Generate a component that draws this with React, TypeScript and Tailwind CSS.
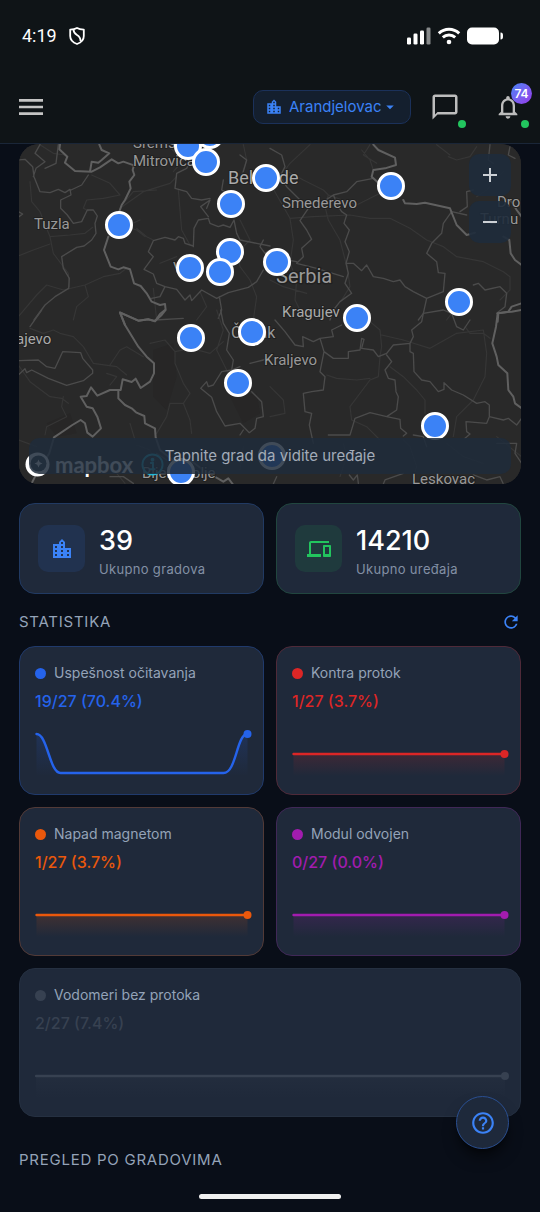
import React from "react";
import {
  MdAdd,
  MdArrowDropDown,
  MdChatBubbleOutline,
  MdDevices,
  MdHelpOutline,
  MdLocationCity,
  MdMenu,
  MdNotificationsNone,
  MdRefresh,
  MdRemove,
} from "react-icons/md";

const MAP_W = 504;
const MAP_H = 340;

const markers = [
  { x: 170, y: 2 },
  { x: 192, y: -9 },
  { x: 188, y: 18 },
  { x: 248, y: 34 },
  { x: 373, y: 42 },
  { x: 213, y: 60 },
  { x: 100, y: 81 },
  { x: 212, y: 108 },
  { x: 172, y: 124 },
  { x: 202, y: 128 },
  { x: 259, y: 118 },
  { x: 442, y: 158 },
  { x: 339, y: 174 },
  { x: 234, y: 188 },
  { x: 173, y: 194 },
  { x: 220, y: 239 },
  { x: 418, y: 282 },
  { x: 254, y: 312 },
  { x: 163, y: 328 },
];

function MapDrawing() {
  return (
    <svg
      className="absolute inset-0 h-full w-full"
      viewBox={`0 0 ${MAP_W} ${MAP_H}`}
      preserveAspectRatio="xMidYMid slice"
      aria-hidden="true"
      fill="none"
      strokeLinejoin="round"
      strokeLinecap="round"
    >
      <rect width={MAP_W} height={MAP_H} fill="#292929" />
      <g transform="translate(-8 -4) scale(.33333)">
        <g stroke="#363636" strokeWidth="3.5">
          <path d="M90 14L130 40L165 45M60 125L65 185L90 215L120 290L180 285L225 280L248 262M120 290L130 340L175 400L178 440M25 348L70 330L120 312M245 105L300 130L330 165L280 175L230 180L220 205L235 212M330 205L400 155L480 130L500 110M340 190L370 155L440 150M380 265L410 290L430 300M505 150L515 270L540 315M390 240L345 260L380 270L405 290M25 530L80 465L110 435L160 450L225 435L280 410L330 400L350 385M225 435L235 470L200 500L190 540M450 370L500 350M430 445L440 540M700 14L710 60L690 120M680 330L690 380L720 420L740 470L730 540" />
          <path d="M570 455L590 500L560 540M470 14L520 60L490 95M690 240L720 300L690 330" />
        </g>
        <g stroke="#4b4b4b" strokeWidth="4">
          <path d="M25 60L45 58L68 80L72 110L90 155L120 158L145 148L165 158L180 148L183 165L152 180L152 205L172 225L190 250L215 245L232 210L250 210L262 228L255 250L258 280L245 300L222 318L200 322L155 350L160 385L178 415L176 445L135 470L105 495L72 540M90 14L75 40L105 65L78 85L70 110M145 14L138 70L105 85M25 215L38 222L27 230M183 150L215 135L235 105" />
          <path d="M500 100L495 145L530 155L545 175L575 180L600 175M500 100L530 85L545 55M550 320L552 265L565 240L595 235L600 250L625 260L640 255L660 262L672 240L680 280L690 300L740 310L780 318M550 318L525 310L520 295L505 290L495 300L465 292L430 302L415 335L430 350L402 388L430 402L440 430L465 440L500 448L525 480L540 465L545 482L575 450L620 475L655 458L715 442L740 425L760 390M590 205L600 180L572 200L595 230M465 440L450 470L425 475M640 120L635 150L665 165L650 185M700 95L710 60L690 45M628 470L635 510L625 535" />
          <path d="M760 300L750 320L765 340L780 330M435 540L520 535" />
        </g>
        <path
          stroke="#606060"
          strokeWidth="6"
          d="M150 14L148 28L172 50L165 68L195 93L245 95L270 82L305 58L325 70L340 65L372 76L368 90L373 105L358 125L362 145L345 180L335 195L328 215M240 95L245 65L265 68L275 60L298 40L275 30L268 14M295 290L282 330L302 380L325 388L340 382L360 388L372 430L392 438L410 460L425 485L450 495L465 492L467 510L455 525L435 543L415 538L385 542L330 517L345 555"
        />
      </g>
      <g transform="translate(252 -4) scale(.33333)">
        <g stroke="#363636" strokeWidth="3.5">
          <path d="M120 14L60 70L45 90L100 120L160 150L175 165L165 200L175 240L210 300L228 370M0 130L60 235L130 230L240 225L300 235L360 235L420 265L470 300L520 320L560 350L640 365L700 395L720 410M60 235L70 300L60 370L80 420L75 480L100 530M175 165L260 195L330 160M275 30L300 60L310 90M535 50L560 60L600 50L620 20M300 14L280 45L320 70M500 14L540 45M700 95L650 150L620 170M0 420L40 440L110 460M720 410L720 450L690 480M530 540L560 500M230 370L240 440L215 480" />
        </g>
        <g stroke="#4b4b4b" strokeWidth="4">
          <path d="M0 25L35 45L45 80L30 110L50 140L100 190L115 205L90 242L110 270L125 298L95 325L100 350L80 370M310 115L260 125L230 155L190 165L205 200L215 215L230 225L222 250L238 270L225 305L238 335L228 370L235 400L225 430L245 460L210 485L190 510L180 540M160 185L190 165M228 370L250 370L275 392L290 375L310 410L340 415L370 425L390 420L405 440L430 455L470 475L520 455L525 400L505 398L500 365L470 340L485 310L515 280L520 250L545 215L590 225M470 475L460 520L445 540M610 435L625 430L645 450L690 440L710 460L705 500L680 520M720 20L715 45L735 55M610 150L590 155L592 200L570 215M80 370L140 385L220 410M0 350L50 360L80 365M660 14L655 60L670 70" />
        </g>
        <path
          stroke="#606060"
          strokeWidth="6"
          d="M310 14L325 30L375 53L378 75L345 85L310 90L305 110L325 128M400 180L405 190L440 192L465 188L540 205L560 255L590 285L615 278M700 175L725 185L740 210L755 230M700 290L718 300L722 340L735 360L755 375M755 490L725 500L715 515L685 520L683 545"
        />
      </g>
      <g transform="translate(-8 166) scale(.33333)">
        <g fill="#272626">
          <path d="M430 120L490 100L500 200L470 300L430 260Z M660 260L740 250L750 310L700 340Z M110 340L180 310L200 370L140 380Z" />
        </g>
        <g stroke="#363636" strokeWidth="3.5">
          <path d="M60 55L100 70L130 60L150 70L190 80L220 110L250 160L320 170L350 195M300 165L330 120L350 110L400 140M420 100L465 90L495 125L495 160L520 220L540 250L520 280L480 280L470 320L440 370M495 125L545 115L600 130L640 95M25 165L60 215L120 260L155 265L175 280M160 260L155 290L170 320L110 350L105 375M290 190L320 200L300 225M360 340L375 390M700 410L690 480M520 280L540 330L545 370M620 0L640 60L620 120L660 200L700 250M25 390L80 410M320 490L345 520M380 405L420 420L440 460" />
        </g>
        <g stroke="#4b4b4b" strokeWidth="4">
          <path d="M25 152L85 150L110 170L135 175L158 125L212 128L218 145L248 180L248 190L220 212L170 226L115 205L65 180L50 188L45 176L25 195M95 0L60 50M632 0L640 40L658 70L650 120L670 150L665 180L635 185L610 225L595 230L590 215L572 235L605 262L620 305L645 348L690 340L718 368L735 355L740 325L760 320L755 275L725 245M665 180L690 170M440 430L470 450M300 500L340 500L370 520" />
          <path d="M690 375L700 360M720 160L760 150L780 140" />
        </g>
        <path
          stroke="#606060"
          strokeWidth="6"
          d="M465 0L450 12L435 34L415 28L385 32L330 8L345 45L385 110L410 140L432 160L432 190L420 215L392 234L377 206L365 216L338 208L332 240L300 240L262 257L243 232L230 258L212 260L230 290L248 295L262 320L273 355L248 380L232 368L225 340L212 330L187 345L132 382L118 430L80 490L60 530M325 242L325 265L345 285L365 295L378 307L403 318L405 340L435 355L437 382L450 420L500 460L540 450L580 480L640 515L655 505L668 522"
        />
      </g>
      <g transform="translate(252 166) scale(.33333)">
        <g stroke="#363636" strokeWidth="3.5">
          <path d="M300 35L330 60L335 110L330 140L325 200L300 210L240 290L245 330M335 75L400 90L480 115L560 70L640 60L650 130L645 200L610 270L560 320L550 380M360 170L400 200L440 240L465 270L465 310M0 230L40 270L45 310L0 320M170 195L200 205L260 210L300 205M245 330L290 350L330 390M585 50L600 70L640 70L660 85M680 380L755 440M400 390L420 410L440 470L430 500M530 400L580 440L640 460M220 400L230 440L210 500" />
        </g>
        <g stroke="#4b4b4b" strokeWidth="4">
          <path d="M15 30L45 65L75 105L100 110L98 80L130 95L150 85L162 125L150 185L165 200L160 240L125 245L100 250L105 305L125 310L118 345L130 400M162 125L190 145L235 145L235 125L270 120L275 85L282 88L275 115L310 120L325 140L350 130L370 105L420 100M420 100L430 80L425 60L455 35L460 10L520 0L545 10L560 50L580 60L600 30M350 135L365 155L345 180L355 205L375 210L378 245L385 260L380 300L350 320L300 308L255 325L240 375L175 375M350 320L390 328L392 355L410 370L400 378M420 100L420 125L430 130L432 185L455 210L480 215L505 245L522 238L522 218L545 240L580 255L620 280L645 275L658 285L658 320L700 330L715 325L740 345L755 325M658 320L650 340L588 335L590 365L600 372L585 385M430 375L460 380L470 410M680 400L740 400L735 430L755 460M610 495L650 510L690 500L700 522M340 522L345 510L400 490M150 85L190 80L185 60L215 45M20 500L10 522M238 495L250 510L262 495L265 520" />
        </g>
        <path stroke="#606060" strokeWidth="6" d="M755 0L725 5L683 10L678 50L667 100L680 140L685 165L712 190L715 240L730 260L735 280L755 295" />
      </g>
      <g
        fontFamily="Roboto, 'Noto Sans', sans-serif"
        fill="#999"
        stroke="#202020"
        strokeWidth="2"
        paintOrder="stroke"
        fontSize="15"
      >
        <text x="115" y="4">Srems</text>
        <text x="115" y="22">Mitrovica</text>
        <text x="16" y="85">Tuzla</text>
        <text x="264" y="64">Smederevo</text>
        <text x="479" y="63">Dro</text>
        <text x="462" y="80">Turnu</text>
        <text x="264" y="173" fill="#aaa">Kragujev</text>
        <text x="-2" y="200" fill="#aaa">ajevo</text>
        <text x="246" y="221">Kraljevo</text>
        <text x="394" y="340">Leskovac</text>
        <text x="155" y="129">V</text>
        <text x="124" y="334">Bijelo Polje</text>
        <text x="213" y="194" fontSize="16">Čačak</text>
        <text x="210" y="40" fontSize="18" fill="#aaa">Belgrade</text>
        <text x="258" y="139" fontSize="20" strokeWidth="3">Serbia</text>
      </g>
    </svg>
  );
}

function MapPanel() {
  return (
    <section aria-label="Mapa gradova" className="relative h-[340px] overflow-hidden rounded-[20px] bg-[#292929]">
      <MapDrawing />
      {markers.map((m, i) => (
        <button
          key={i}
          type="button"
          aria-label={`Grad ${i + 1}`}
          className="absolute size-7 -translate-x-1/2 -translate-y-1/2 rounded-full border-[3px] border-white bg-[#3b82f6]"
          style={{ left: `${(m.x / MAP_W) * 100}%`, top: m.y }}
        />
      ))}
      <div className="absolute bottom-[7px] left-1.5 flex items-center gap-[5px]">
        <svg className="size-[25px]" viewBox="0 0 25 25" aria-hidden="true">
          <circle cx="12.5" cy="12.5" r="12" fill="#fff" />
          <circle cx="13.5" cy="11.5" r="8" fill="#333d47" />
          <path d="M13.500 7.500l1.200 2.800 2.800 1.200-2.800 1.200-1.200 2.800-1.200-2.800-2.800-1.200 2.800-1.200z" fill="#fff" />
        </svg>
        <span className="font-[Lato,sans-serif] text-[22px] leading-6 font-bold text-white">mapbox</span>
        <svg className="ml-[3px] size-[23px]" viewBox="0 0 24 24" fill="none" stroke="#22b8d8" strokeWidth="2" aria-hidden="true">
          <circle cx="12" cy="12" r="10.500" />
          <path d="M9.500 10.500h3v6M9 17h6" />
          <circle cx="12" cy="7" r="1" fill="#22b8d8" />
        </svg>
      </div>
      <div className="absolute right-2.5 top-2.5 flex flex-col gap-[5px]">
        <button type="button" aria-label="Uvećaj" className="flex size-[42px] items-center justify-center rounded-[10px] bg-[#1e2b3b]/90 text-[#ccd0d5]">
          <MdAdd className="size-6" />
        </button>
        <button type="button" aria-label="Umanji" className="flex size-[42px] items-center justify-center rounded-[10px] bg-[#1e2b3b]/90 text-[#ccd0d5]">
          <MdRemove className="size-6" />
        </button>
      </div>
      <p className="absolute inset-x-2.5 bottom-2.5 flex h-9 items-center justify-center rounded-[10px] bg-[#1e2b3b]/85 text-[15px] text-[#a3acb8]">
        Tapnite grad da vidite uređaje
      </p>
    </section>
  );
}

function StatusBar() {
  return (
    <div className="flex h-[71px] items-center justify-between pl-[22px] pr-[37px]">
      <div className="flex items-center gap-3">
        <span className="font-[Roboto,sans-serif] text-[18px] leading-6 text-white">4:19</span>
        <svg className="h-[18px] w-4" viewBox="0 0 16 18" fill="none" stroke="#fff" strokeWidth="1.800" strokeLinejoin="round" aria-hidden="true">
          <path d="M8 1C6 2.300 3.500 2.600 1.200 2.600V9C1.200 13 4 15.600 8 17C12 15.600 14.800 13 14.800 9V2.600C12.500 2.600 10 2.300 8 1Z" />
          <path d="M4.500 2.500C4.500 9.500 11.800 6.500 11.500 14" />
        </svg>
      </div>
      <svg className="h-[18px] w-24" viewBox="0 0 96 18" fill="#fff" aria-hidden="true">
        <rect x="0" y="10.500" width="4" height="7" rx="1.300" />
        <rect x="6.500" y="6.500" width="4" height="11" rx="1.300" />
        <rect x="13" y="3.500" width="4" height="14" rx="1.300" />
        <rect x="19.500" y=".5" width="4" height="17" rx="1.300" opacity=".5" />
        <g fill="none" stroke="#fff" strokeWidth="3">
          <path d="M31.800 6.400C37.600.8 46.400.8 52.200 6.400" />
          <path d="M35.800 10.400C39.300 7.200 44.700 7.200 48.200 10.400" />
        </g>
        <circle cx="42" cy="15" r="2.300" />
        <rect x="60" y=".5" width="32" height="17" rx="5" />
        <path d="M93.500 5.500C95.800 5.500 96 7 96 9S95.800 12.500 93.500 12.500Z" />
      </svg>
    </div>
  );
}

function Header() {
  return (
    <header className="border-b border-[#1a2638] bg-[#0f1417]">
      <StatusBar />
      <div className="flex h-[72px] items-center justify-between pl-[15px]">
        <button type="button" aria-label="Meni" className="text-[#c4c4c4]">
          <MdMenu className="size-8" />
        </button>
        <div className="flex items-center">
          <div className="relative mr-2.5 text-[#3b82f6]">
            <MdLocationCity className="pointer-events-none absolute left-3 top-2 size-[18px]" />
            <select
              aria-label="Grad"
              className="h-[34px] w-[158px] appearance-none rounded-[10px] border border-[#1b315a] bg-[#141f2e] pl-[35px] text-[15px] text-[#3b82f6]"
            >
              <option>Arandjelovac</option>
            </select>
            <MdArrowDropDown className="pointer-events-none absolute right-3 top-2 size-[18px]" />
          </div>
          <button type="button" aria-label="Poruke" className="relative flex size-12 items-center justify-center text-[#bdbdbd]">
            <MdChatBubbleOutline className="size-[30px]" />
            <span className="absolute bottom-[3px] right-[3px] size-2 rounded-full bg-[#22c55e]" />
          </button>
          <button type="button" aria-label="Obaveštenja" className="relative ml-[15px] mr-2 flex size-12 items-center justify-center text-[#bdbdbd]">
            <MdNotificationsNone className="size-7" />
            <span className="absolute right-0 top-0 flex size-[21px] items-center justify-center rounded-full bg-linear-to-br from-[#3b82f6] to-[#9333ea] text-[12px] font-semibold text-white">
              74
            </span>
            <span className="absolute bottom-[3px] right-[3px] size-2 rounded-full bg-[#22c55e]" />
          </button>
        </div>
      </div>
    </header>
  );
}

type TotalProps = { value: string; label: string; icon: React.ReactNode; card: string; tile: string };

function Total({ value, label, icon, card, tile }: TotalProps) {
  return (
    <div className={`flex h-[91px] items-center gap-3.5 rounded-[16px] border bg-[#1f293a] px-[18px] ${card}`}>
      <div className={`flex size-[47px] items-center justify-center rounded-[10px] ${tile}`}>{icon}</div>
      <div className="pt-1">
        <p className="text-[27px] leading-9 font-medium text-white">{value}</p>
        <p className="text-[13px] leading-5 tracking-wide text-[#8390a5]">{label}</p>
      </div>
    </div>
  );
}

type Metric = { title: string; value: string; color: string; border: string; dip?: boolean; wide?: boolean };

const metrics: Metric[] = [
  { title: "Uspešnost očitavanja", value: "19/27 (70.4%)", color: "#2563eb", border: "border-[#203a6c]", dip: true },
  { title: "Kontra protok", value: "1/27 (3.7%)", color: "#dc2626", border: "border-[#4f2a39]" },
  { title: "Napad magnetom", value: "1/27 (3.7%)", color: "#ea580c", border: "border-[#523a37]" },
  { title: "Modul odvojen", value: "0/27 (0.0%)", color: "#a21caf", border: "border-[#402857]" },
  { title: "Vodomeri bez protoka", value: "2/27 (7.4%)", color: "#374151", border: "border-[#253041]", wide: true },
];

function Sparkline({ color, dip, wide, id }: { color: string; dip?: boolean; wide?: boolean; id: string }) {
  const w = wide ? 475 : 217;
  const end = w - 5;
  const line = dip
    ? `M1 6C12 6 14 45 25 45H${end - 24}C${end - 11} 45 ${end - 11} 6 ${end} 6`
    : `M1 26H${end}`;
  return (
    <svg className="mt-[15px] block h-[50px] w-full" viewBox={`0 0 ${w} 50`} aria-hidden="true">
      <defs>
        <linearGradient id={id} x1="0" y1={dip ? 6 : 26} x2="0" y2="48" gradientUnits="userSpaceOnUse">
          <stop offset="0" stopColor={color} stopOpacity=".16" />
          <stop offset="1" stopColor={color} stopOpacity="0" />
        </linearGradient>
      </defs>
      <path d={`${line}V48H1Z`} fill={`url(#${id})`} />
      <path d={line} fill="none" stroke={color} strokeWidth="2.400" strokeLinecap="round" />
      <circle cx={end} cy={dip ? 6 : 26} r="4" fill={color} />
    </svg>
  );
}

function MetricCard({ m, index }: { m: Metric; index: number }) {
  return (
    <article className={`h-[149px] rounded-[16px] border bg-[#1f293a] pt-4 pl-[15px] pr-[10px] ${m.border} ${m.wide ? "col-span-2" : ""}`}>
      <h3 className="flex items-center gap-2 text-[14px] leading-5 text-[#94a3b8]">
        <span className="size-[11px] rounded-full" style={{ backgroundColor: m.color }} />
        {m.title}
      </h3>
      <p className="mt-1.5 text-[16px] leading-6 font-medium" style={{ color: m.color }}>
        {m.value}
      </p>
      <Sparkline color={m.color} dip={m.dip} wide={m.wide} id={`fill-${index}`} />
    </article>
  );
}

export default function App() {
  return (
    <div className="min-h-screen bg-[#090e18] pb-10 font-[Inter,'Noto_Sans',sans-serif]">
      <Header />
      <main className="px-[19px]">
        <MapPanel />
        <section className="mt-[19px] grid grid-cols-2 gap-3">
          <Total
            value="39"
            label="Ukupno gradova"
            card="border-[#213a63]"
            tile="bg-[#21324f]"
            icon={<MdLocationCity className="size-6 text-[#3b82f6]" />}
          />
          <Total
            value="14210"
            label="Ukupno uređaja"
            card="border-[#21463f]"
            tile="bg-[#1f3a3d]"
            icon={<MdDevices className="size-6 text-[#22c55e]" />}
          />
        </section>
        <div className="flex h-[52px] items-center justify-between pt-1">
          <h2 className="text-[15px] tracking-wider text-[#94a3b8]">STATISTIKA</h2>
          <button type="button" aria-label="Osveži" className="text-[#3b82f6]">
            <MdRefresh className="size-5" />
          </button>
        </div>
        <section className="grid grid-cols-2 gap-3">
          {metrics.map((m, i) => (
            <MetricCard key={m.title} m={m} index={i} />
          ))}
        </section>
        <h2 className="mt-[31px] text-[15px] leading-6 tracking-wider text-[#94a3b8]">PREGLED PO GRADOVIMA</h2>
      </main>
      <button
        type="button"
        aria-label="Pomoć"
        className="fixed bottom-[63px] right-[31px] flex size-[53px] items-center justify-center rounded-full border border-[#2a4f91] bg-[#1e293b] text-[#3b82f6] shadow-lg shadow-black/60"
      >
        <MdHelpOutline className="size-[26px]" />
      </button>
      <div className="fixed bottom-[13px] left-1/2 h-[5px] w-[142px] -translate-x-1/2 rounded-full bg-[#f0f0f0]" />
    </div>
  );
}
